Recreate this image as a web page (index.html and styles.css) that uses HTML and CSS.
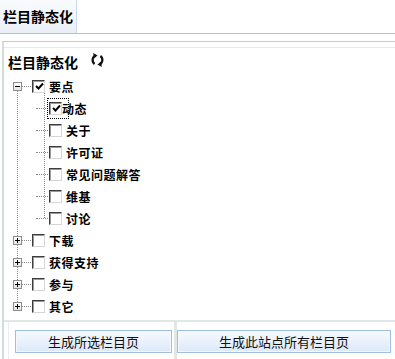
FILE: index.html
```html
<!DOCTYPE html>
<html>
<head>
<meta charset="utf-8">
<link rel="stylesheet" href="styles.css">
</head>
<body>
<div class="tabs"><div class="tab">栏目静态化</div></div>
<div class="panel">
  <div class="inner">
    <div class="title">栏目静态化
      <svg class="refresh" width="15" height="14" viewBox="0 0 15 14">
        <path d="M5.8 2.6 A4.8 4.8 0 0 0 4.6 11" fill="none" stroke="#111" stroke-width="2.2"/>
        <path d="M3.2 0 L7.6 2.4 L3.8 5.2 Z" fill="#111"/>
        <path d="M9.2 11.4 A4.8 4.8 0 0 0 10.4 3" fill="none" stroke="#111" stroke-width="2.2"/>
        <path d="M11.8 14 L7.4 11.6 L11.2 8.8 Z" fill="#111"/>
      </svg>
    </div>
    <div class="tree">
      <div class="node">
        <div class="row"><span class="exp minus"></span><span class="h"></span><span class="cb checked"><svg width="9" height="9" viewBox="0 0 9 9"><path d="M1 4 L3.5 6.5 L8 1.5" fill="none" stroke="#000" stroke-width="1.9"/></svg></span><span class="label">要点</span></div>
        <div class="children">
          <div class="row child"><span class="h2"></span><span class="focus"><span class="cb checked"><svg width="9" height="9" viewBox="0 0 9 9"><path d="M1 4 L3.5 6.5 L8 1.5" fill="none" stroke="#000" stroke-width="1.9"/></svg></span></span><span class="label tight">动态</span></div>
          <div class="row child"><span class="h2"></span><span class="cb"></span><span class="label">关于</span></div>
          <div class="row child"><span class="h2"></span><span class="cb"></span><span class="label">许可证</span></div>
          <div class="row child"><span class="h2"></span><span class="cb"></span><span class="label">常见问题解答</span></div>
          <div class="row child"><span class="h2"></span><span class="cb"></span><span class="label">维基</span></div>
          <div class="row child"><span class="h2"></span><span class="cb"></span><span class="label">讨论</span></div>
        </div>
      </div>
      <div class="row"><span class="exp plus"></span><span class="h"></span><span class="cb"></span><span class="label">下载</span></div>
      <div class="row"><span class="exp plus"></span><span class="h"></span><span class="cb"></span><span class="label">获得支持</span></div>
      <div class="row"><span class="exp plus"></span><span class="h"></span><span class="cb"></span><span class="label">参与</span></div>
      <div class="row"><span class="exp plus"></span><span class="h"></span><span class="cb"></span><span class="label">其它</span></div>
    </div>
    <div class="actions">
      <div class="cell first"><button class="btn">生成所选栏目页</button></div>
      <div class="cell second"><button class="btn">生成此站点所有栏目页</button></div>
    </div>
  </div>
</div>
</body>
</html>
```
FILE: styles.css
```css
html, body {
  margin: 0;
  padding: 0;
  background: #fff;
  font-family: "Noto Sans CJK SC", "Liberation Sans", sans-serif;
  color: #000;
}
.tabs {
  height: 33px;
  border-bottom: 1px solid #a9c3e2;
  display: flex;
}
.tab {
  width: 73px;
  padding-left: 3px;
  background: linear-gradient(#f9fbfe, #eaf0f8);
  border-right: 1px solid #c9d7ec;
  font-weight: bold;
  font-size: 14px;
  line-height: 33px;
}
.panel {
  margin: 7px 0 0 2px;
  border-top: 1px solid #c3d0d0;
  border-left: 2px solid #d3dcdc;
}
.inner {
  margin-top: 5px;
  border-top: 1px solid #e1e9e9;
}
.title {
  height: 27px;
  display: flex;
  align-items: center;
  padding-left: 4px;
  font-weight: bold;
  font-size: 14px;
}
.refresh {
  margin-left: 12px;
  margin-top: -3px;
}
.tree {
  position: relative;
  padding-left: 9px;
}
.tree::before {
  content: "";
  position: absolute;
  left: 13px;
  top: 11px;
  bottom: 11px;
  border-left: 1px dotted #8a8a8a;
}
.row {
  height: 22px;
  display: flex;
  align-items: center;
  position: relative;
}
.exp {
  width: 7px;
  height: 7px;
  border: 1px solid #8e8e8e;
  background: linear-gradient(#fff, #e4e4e4);
  position: relative;
  z-index: 1;
}
.exp::before {
  content: "";
  position: absolute;
  left: 1px;
  top: 3px;
  width: 5px;
  height: 1px;
  background: #000;
}
.exp.plus::after {
  content: "";
  position: absolute;
  left: 3px;
  top: 1px;
  width: 1px;
  height: 5px;
  background: #000;
}
.h {
  width: 9px;
  border-top: 1px dotted #8a8a8a;
  margin-right: 1px;
}
.cb {
  width: 11px;
  height: 11px;
  border: 1px solid;
  border-color: #3c3c3c #d6d6d6 #d6d6d6 #3c3c3c;
  box-shadow: inset 1px 1px 0 #9a9a9a;
  background: #fff;
  display: flex;
  align-items: center;
  justify-content: center;
  flex: none;
}
.cb svg {
  margin: 1px 0 0 1px;
}
.label {
  margin-left: 4px;
  font-weight: bold;
  font-size: 12px;
  letter-spacing: 0.5px;
}
.label.tight {
  margin-left: 1px;
}
.children {
  position: relative;
}
.children::before {
  content: "";
  position: absolute;
  left: 31px;
  top: -4px;
  bottom: 11px;
  border-left: 1px dotted #8a8a8a;
}
.row.child {
  padding-left: 23px;
}
.h2 {
  width: 12px;
  border-top: 1px dotted #8a8a8a;
  margin-right: 1px;
}
.focus {
  outline: 1px dotted #000;
  padding: 3px 6px 3px 1px;
  margin-left: -4px;
  margin-right: -4px;
  display: flex;
  position: relative;
  left: 3px;
}
.actions {
  margin-top: 3px;
  border-top: 2px solid #dfe7e7;
  display: flex;
  padding-left: 4px;
}
.cell {
  padding: 8px 2px 8px 0;
  display: flex;
  border-left: 1px solid #e8eeee;
}
.cell.first {
  padding-left: 6px;
  border-right: 3px solid #dfe7e7;
}
.cell.second {
  padding-left: 0;
  border-left: none;
}
.btn {
  height: 23px;
  border: 1px solid #9ebee4;
  box-shadow: inset 0 0 0 1px #f4f8fd;
  background: linear-gradient(#f7faff, #dce8f9);
  font-family: "Noto Sans CJK SC", "Liberation Sans", sans-serif;
  font-size: 13px;
  color: #111;
  padding: 0;
  margin: 0;
}
.first .btn {
  width: 157px;
}
.second .btn {
  width: 214px;
}
```
